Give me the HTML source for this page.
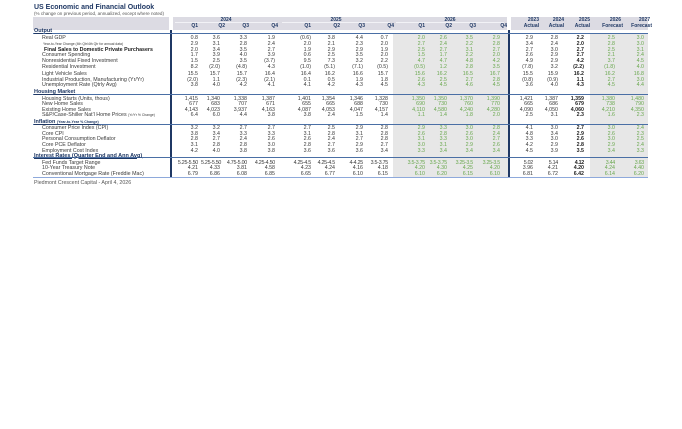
<!DOCTYPE html>
<html><head><meta charset="utf-8"><style>
*{margin:0;padding:0;box-sizing:border-box}
body{width:682px;height:429px;background:#fff;font-family:"Liberation Sans",sans-serif;position:relative;overflow:hidden;color:#3a3a3a}
.abs{position:absolute}
.row{position:absolute;left:33px;height:6px;line-height:6px;display:flex;font-size:5.3px;white-space:nowrap}
.row>span{display:block;text-align:right;padding-right:3px;overflow:visible}
.row>span>span{display:inline}
.l{width:139px;text-align:left!important;padding-left:9px}
.g{color:#6aa84f}
.b{font-weight:bold;color:#222}
.sec{position:absolute;left:34px;font-size:5.5px;font-weight:bold;color:#1f3864;text-decoration:underline;height:6px;line-height:6px;white-space:nowrap}
.hl{position:absolute;left:33px;width:615px;height:1px;background:#4a6fa5}
.hd{position:absolute;font-size:5px;font-weight:bold;color:#1f3864;text-align:center}
</style></head><body>
<div class="abs" style="left:34px;top:4px;font-size:7px;font-weight:bold;color:#1f3864">US Economic and Financial Outlook</div>
<div class="abs" style="left:34px;top:11px;font-size:4.6px;color:#555">(% change on previous period, annualized, except where noted)</div>

<div class="abs" style="left:33px;top:17px;width:136px;height:13px;background:#dcdbe3"></div>
<div class="abs" style="left:173px;top:17px;width:334px;height:13px;background:#dcdbe3"></div>
<div class="abs" style="left:511px;top:17px;width:137px;height:13px;background:#dcdbe3"></div>
<div class="abs" style="left:175px;top:22px;width:102px;height:1px;background:#f2f2f6"></div>
<div class="abs" style="left:282px;top:22px;width:108px;height:1px;background:#f2f2f6"></div>
<div class="abs" style="left:396px;top:22px;width:108px;height:1px;background:#f2f2f6"></div>
<div class="hd" style="left:175px;top:17px;width:102px">2024</div>
<div class="hd" style="left:282px;top:17px;width:108px">2025</div>
<div class="hd" style="left:396px;top:17px;width:108px">2026</div>
<div class="row" style="top:17px;color:#1f3864;font-weight:bold;font-size:5px"><span class="l"></span><span style="width:33px"></span><span style="width:25px"></span><span style="width:27px"></span><span style="width:28px"></span><span style="width:36px"></span><span style="width:24px"></span><span style="width:28px"></span><span style="width:27px"></span><span style="width:35px"></span><span style="width:22px"></span><span style="width:26px"></span><span style="width:34px"></span><span style="width:25px">2023</span><span style="width:25px">2024</span><span style="width:30px;padding-right:7px">2025</span><span style="width:29px;padding-right:5px">2026</span><span style="width:29px;padding-right:5px">2027</span></div>
<div class="row" style="top:23px;color:#1f3864;font-weight:bold;font-size:5px"><span class="l"></span><span style="width:33px;padding-right:7px">Q1</span><span style="width:25px;padding-right:5px">Q2</span><span style="width:27px;padding-right:8px">Q3</span><span style="width:28px;padding-right:7px">Q4</span><span style="width:36px;padding-right:10px">Q1</span><span style="width:24px;padding-right:5px">Q2</span><span style="width:28px;padding-right:8px">Q3</span><span style="width:27px;padding-right:6px">Q4</span><span style="width:35px;padding-right:10px">Q1</span><span style="width:22px;padding-right:5px">Q2</span><span style="width:26px;padding-right:7px">Q3</span><span style="width:34px;padding-right:10px">Q4</span><span style="width:25px">Actual</span><span style="width:25px">Actual</span><span style="width:30px;padding-right:7px">Actual</span><span style="width:29px;padding-right:3px">Forecast</span><span style="width:29px;padding-right:3px">Forecast</span></div>

<div class="abs" style="left:393px;top:33px;width:115px;height:144px;background:#e7e7e7"></div>
<div class="abs" style="left:590px;top:33px;width:58px;height:144px;background:#e7e7e7"></div>
<div class="abs" style="left:170px;top:30px;width:2px;height:148px;background:#1f3864"></div>
<div class="abs" style="left:508px;top:30px;width:2px;height:148px;background:#1f3864"></div>
<div class="hl" style="top:33px"></div>
<div class="hl" style="top:94px"></div>
<div class="hl" style="top:124px"></div>
<div class="hl" style="top:157px"></div>
<div class="hl" style="top:177px;background:#8ea9db"></div>

<div class="sec" style="top:27.5px">Output</div>
<div class="sec" style="top:89px">Housing Market</div>
<div class="sec" style="top:119px">Inflation <span style="font-size:3.6px">(Year-to-Year % Change)</span></div>
<div class="sec" style="top:152.5px">Interest Rates (Quarter End and Ann Avg)</div>

<div class="row" style="top:35px"><span class="l">Real GDP</span><span style="width:29px">0.8</span><span style="width:22px">3.6</span><span style="width:27px">3.3</span><span style="width:28px">1.9</span><span style="width:36px">(0.6)</span><span style="width:24px">3.8</span><span style="width:28px">4.4</span><span style="width:27px;padding-right:5px">0.7</span><span class="g" style="width:35px">2.0</span><span class="g" style="width:22px">2.6</span><span class="g" style="width:26px">3.5</span><span class="g" style="width:32px;padding-right:8px">2.9</span><span style="width:2px"></span><span style="width:25px">2.9</span><span style="width:25px">2.8</span><span class="b" style="width:30px;padding-right:7px">2.2</span><span class="g" style="width:29px;padding-right:5px">2.5</span><span class="g" style="width:29px;padding-right:5px">3.0</span></div>
<div class="row" style="top:41px"><span class="l" style="font-size:3.4px;padding-left:10px">Year-to-Year Change (4th Qtr/4th Qtr for annual data)</span><span style="width:29px">2.9</span><span style="width:22px">3.1</span><span style="width:27px">2.8</span><span style="width:28px">2.4</span><span style="width:36px">2.0</span><span style="width:24px">2.1</span><span style="width:28px">2.3</span><span style="width:27px;padding-right:5px">2.0</span><span class="g" style="width:35px">2.7</span><span class="g" style="width:22px">2.4</span><span class="g" style="width:26px">2.2</span><span class="g" style="width:32px;padding-right:8px">2.8</span><span style="width:2px"></span><span style="width:25px">3.4</span><span style="width:25px">2.4</span><span class="b" style="width:30px;padding-right:7px">2.0</span><span class="g" style="width:29px;padding-right:5px">2.8</span><span class="g" style="width:29px;padding-right:5px">3.0</span></div>
<div class="row" style="top:46.5px"><span class="l b" style="padding-left:11px">Final Sales to Domestic Private Purchasers</span><span style="width:29px">2.0</span><span style="width:22px">3.4</span><span style="width:27px">3.5</span><span style="width:28px">2.7</span><span style="width:36px">1.9</span><span style="width:24px">2.9</span><span style="width:28px">2.9</span><span style="width:27px;padding-right:5px">1.9</span><span class="g" style="width:35px">2.5</span><span class="g" style="width:22px">2.7</span><span class="g" style="width:26px">3.1</span><span class="g" style="width:32px;padding-right:8px">2.7</span><span style="width:2px"></span><span style="width:25px">2.7</span><span style="width:25px">3.0</span><span class="b" style="width:30px;padding-right:7px">2.7</span><span class="g" style="width:29px;padding-right:5px">2.5</span><span class="g" style="width:29px;padding-right:5px">3.1</span></div>
<div class="row" style="top:52px"><span class="l">Consumer Spending</span><span style="width:29px">1.7</span><span style="width:22px">3.9</span><span style="width:27px">4.0</span><span style="width:28px">3.9</span><span style="width:36px">0.6</span><span style="width:24px">2.5</span><span style="width:28px">3.5</span><span style="width:27px;padding-right:5px">2.0</span><span class="g" style="width:35px">1.5</span><span class="g" style="width:22px">1.7</span><span class="g" style="width:26px">2.2</span><span class="g" style="width:32px;padding-right:8px">2.0</span><span style="width:2px"></span><span style="width:25px">2.6</span><span style="width:25px">2.9</span><span class="b" style="width:30px;padding-right:7px">2.7</span><span class="g" style="width:29px;padding-right:5px">2.1</span><span class="g" style="width:29px;padding-right:5px">2.4</span></div>
<div class="row" style="top:58px"><span class="l">Nonresidential Fixed Investment</span><span style="width:29px">1.5</span><span style="width:22px">2.5</span><span style="width:27px">3.5</span><span style="width:28px">(3.7)</span><span style="width:36px">9.5</span><span style="width:24px">7.3</span><span style="width:28px">3.2</span><span style="width:27px;padding-right:5px">2.2</span><span class="g" style="width:35px">4.7</span><span class="g" style="width:22px">4.7</span><span class="g" style="width:26px">4.8</span><span class="g" style="width:32px;padding-right:8px">4.2</span><span style="width:2px"></span><span style="width:25px">4.9</span><span style="width:25px">2.9</span><span class="b" style="width:30px;padding-right:7px">4.2</span><span class="g" style="width:29px;padding-right:5px">3.7</span><span class="g" style="width:29px;padding-right:5px">4.5</span></div>
<div class="row" style="top:63.5px"><span class="l">Residential Investment</span><span style="width:29px">8.2</span><span style="width:22px">(2.0)</span><span style="width:27px">(4.8)</span><span style="width:28px">4.3</span><span style="width:36px">(1.0)</span><span style="width:24px">(5.1)</span><span style="width:28px">(7.1)</span><span style="width:27px;padding-right:5px">(0.5)</span><span class="g" style="width:35px">(0.5)</span><span class="g" style="width:22px">1.2</span><span class="g" style="width:26px">2.8</span><span class="g" style="width:32px;padding-right:8px">3.5</span><span style="width:2px"></span><span style="width:25px">(7.8)</span><span style="width:25px">3.2</span><span class="b" style="width:30px;padding-right:7px">(2.2)</span><span class="g" style="width:29px;padding-right:5px">(1.8)</span><span class="g" style="width:29px;padding-right:5px">4.0</span></div>
<div class="row" style="top:70.5px"><span class="l">Light Vehicle Sales</span><span style="width:29px">15.5</span><span style="width:22px">15.7</span><span style="width:27px">15.7</span><span style="width:28px">16.4</span><span style="width:36px">16.4</span><span style="width:24px">16.2</span><span style="width:28px">16.6</span><span style="width:27px;padding-right:5px">15.7</span><span class="g" style="width:35px">15.6</span><span class="g" style="width:22px">16.2</span><span class="g" style="width:26px">16.5</span><span class="g" style="width:32px;padding-right:8px">16.7</span><span style="width:2px"></span><span style="width:25px">15.5</span><span style="width:25px">15.9</span><span class="b" style="width:30px;padding-right:7px">16.2</span><span class="g" style="width:29px;padding-right:5px">16.2</span><span class="g" style="width:29px;padding-right:5px">16.8</span></div>
<div class="row" style="top:76.5px"><span class="l">Industrial Production, Manufacturing (Yr/Yr)</span><span style="width:29px">(2.0)</span><span style="width:22px">1.1</span><span style="width:27px">(2.3)</span><span style="width:28px">(2.1)</span><span style="width:36px">0.1</span><span style="width:24px">0.5</span><span style="width:28px">1.9</span><span style="width:27px;padding-right:5px">1.8</span><span class="g" style="width:35px">2.6</span><span class="g" style="width:22px">2.5</span><span class="g" style="width:26px">2.7</span><span class="g" style="width:32px;padding-right:8px">2.8</span><span style="width:2px"></span><span style="width:25px">(0.8)</span><span style="width:25px">(0.9)</span><span class="b" style="width:30px;padding-right:7px">1.1</span><span class="g" style="width:29px;padding-right:5px">2.7</span><span class="g" style="width:29px;padding-right:5px">3.0</span></div>
<div class="row" style="top:82px"><span class="l">Unemployment Rate (Qtrly Avg)</span><span style="width:29px">3.8</span><span style="width:22px">4.0</span><span style="width:27px">4.2</span><span style="width:28px">4.1</span><span style="width:36px">4.1</span><span style="width:24px">4.2</span><span style="width:28px">4.3</span><span style="width:27px;padding-right:5px">4.5</span><span class="g" style="width:35px">4.3</span><span class="g" style="width:22px">4.5</span><span class="g" style="width:26px">4.6</span><span class="g" style="width:32px;padding-right:8px">4.5</span><span style="width:2px"></span><span style="width:25px">3.6</span><span style="width:25px">4.0</span><span class="b" style="width:30px;padding-right:7px">4.3</span><span class="g" style="width:29px;padding-right:5px">4.5</span><span class="g" style="width:29px;padding-right:5px">4.4</span></div>

<div class="row" style="top:95.5px"><span class="l">Housing Starts (Units, thous)</span><span style="width:29px">1,415</span><span style="width:22px">1,340</span><span style="width:27px">1,338</span><span style="width:28px">1,387</span><span style="width:36px">1,401</span><span style="width:24px">1,354</span><span style="width:28px">1,346</span><span style="width:27px;padding-right:5px">1,328</span><span class="g" style="width:35px">1,350</span><span class="g" style="width:22px">1,350</span><span class="g" style="width:26px">1,370</span><span class="g" style="width:32px;padding-right:8px">1,390</span><span style="width:2px"></span><span style="width:25px">1,421</span><span style="width:25px">1,387</span><span class="b" style="width:30px;padding-right:7px">1,359</span><span class="g" style="width:29px;padding-right:5px">1,380</span><span class="g" style="width:29px;padding-right:5px">1,480</span></div>
<div class="row" style="top:101px"><span class="l">New Home Sales</span><span style="width:29px">677</span><span style="width:22px">683</span><span style="width:27px">707</span><span style="width:28px">671</span><span style="width:36px">655</span><span style="width:24px">665</span><span style="width:28px">688</span><span style="width:27px;padding-right:5px">730</span><span class="g" style="width:35px">690</span><span class="g" style="width:22px">730</span><span class="g" style="width:26px">760</span><span class="g" style="width:32px;padding-right:8px">770</span><span style="width:2px"></span><span style="width:25px">665</span><span style="width:25px">686</span><span class="b" style="width:30px;padding-right:7px">679</span><span class="g" style="width:29px;padding-right:5px">738</span><span class="g" style="width:29px;padding-right:5px">790</span></div>
<div class="row" style="top:107px"><span class="l">Existing Home Sales</span><span style="width:29px">4,143</span><span style="width:22px">4,023</span><span style="width:27px">3,937</span><span style="width:28px">4,163</span><span style="width:36px">4,087</span><span style="width:24px">4,053</span><span style="width:28px">4,047</span><span style="width:27px;padding-right:5px">4,157</span><span class="g" style="width:35px">4,110</span><span class="g" style="width:22px">4,580</span><span class="g" style="width:26px">4,240</span><span class="g" style="width:32px;padding-right:8px">4,280</span><span style="width:2px"></span><span style="width:25px">4,090</span><span style="width:25px">4,050</span><span class="b" style="width:30px;padding-right:7px">4,060</span><span class="g" style="width:29px;padding-right:5px">4,210</span><span class="g" style="width:29px;padding-right:5px">4,350</span></div>
<div class="row" style="top:112px"><span class="l">S&amp;P/Case-Shiller Nat'l Home Prices <span style="font-size:3.4px">(Yr/Yr % Change)</span></span><span style="width:29px">6.4</span><span style="width:22px">6.0</span><span style="width:27px">4.4</span><span style="width:28px">3.8</span><span style="width:36px">3.8</span><span style="width:24px">2.4</span><span style="width:28px">1.5</span><span style="width:27px;padding-right:5px">1.4</span><span class="g" style="width:35px">1.1</span><span class="g" style="width:22px">1.4</span><span class="g" style="width:26px">1.8</span><span class="g" style="width:32px;padding-right:8px">2.0</span><span style="width:2px"></span><span style="width:25px">2.5</span><span style="width:25px">3.1</span><span class="b" style="width:30px;padding-right:7px">2.3</span><span class="g" style="width:29px;padding-right:5px">1.6</span><span class="g" style="width:29px;padding-right:5px">2.3</span></div>

<div class="row" style="top:125px"><span class="l">Consumer Price Index (CPI)</span><span style="width:29px">3.2</span><span style="width:22px">3.2</span><span style="width:27px">2.7</span><span style="width:28px">2.7</span><span style="width:36px">2.7</span><span style="width:24px">2.5</span><span style="width:28px">2.9</span><span style="width:27px;padding-right:5px">2.8</span><span class="g" style="width:35px">2.9</span><span class="g" style="width:22px">3.3</span><span class="g" style="width:26px">3.0</span><span class="g" style="width:32px;padding-right:8px">2.8</span><span style="width:2px"></span><span style="width:25px">4.1</span><span style="width:25px">3.0</span><span class="b" style="width:30px;padding-right:7px">2.7</span><span class="g" style="width:29px;padding-right:5px">3.0</span><span class="g" style="width:29px;padding-right:5px">2.4</span></div>
<div class="row" style="top:130.5px"><span class="l">Core CPI</span><span style="width:29px">3.8</span><span style="width:22px">3.4</span><span style="width:27px">3.3</span><span style="width:28px">3.3</span><span style="width:36px">3.1</span><span style="width:24px">2.8</span><span style="width:28px">3.1</span><span style="width:27px;padding-right:5px">2.8</span><span class="g" style="width:35px">2.6</span><span class="g" style="width:22px">2.8</span><span class="g" style="width:26px">2.6</span><span class="g" style="width:32px;padding-right:8px">2.4</span><span style="width:2px"></span><span style="width:25px">4.8</span><span style="width:25px">3.4</span><span class="b" style="width:30px;padding-right:7px">2.9</span><span class="g" style="width:29px;padding-right:5px">2.6</span><span class="g" style="width:29px;padding-right:5px">2.3</span></div>
<div class="row" style="top:136px"><span class="l">Personal Consumption Deflator</span><span style="width:29px">2.8</span><span style="width:22px">2.7</span><span style="width:27px">2.4</span><span style="width:28px">2.6</span><span style="width:36px">2.6</span><span style="width:24px">2.4</span><span style="width:28px">2.7</span><span style="width:27px;padding-right:5px">2.8</span><span class="g" style="width:35px">3.1</span><span class="g" style="width:22px">3.3</span><span class="g" style="width:26px">3.0</span><span class="g" style="width:32px;padding-right:8px">2.7</span><span style="width:2px"></span><span style="width:25px">3.3</span><span style="width:25px">3.0</span><span class="b" style="width:30px;padding-right:7px">2.6</span><span class="g" style="width:29px;padding-right:5px">3.0</span><span class="g" style="width:29px;padding-right:5px">2.5</span></div>
<div class="row" style="top:142px"><span class="l">Core PCE Deflator</span><span style="width:29px">3.1</span><span style="width:22px">2.8</span><span style="width:27px">2.8</span><span style="width:28px">3.0</span><span style="width:36px">2.8</span><span style="width:24px">2.7</span><span style="width:28px">2.9</span><span style="width:27px;padding-right:5px">2.7</span><span class="g" style="width:35px">3.0</span><span class="g" style="width:22px">3.1</span><span class="g" style="width:26px">2.9</span><span class="g" style="width:32px;padding-right:8px">2.6</span><span style="width:2px"></span><span style="width:25px">4.2</span><span style="width:25px">2.9</span><span class="b" style="width:30px;padding-right:7px">2.8</span><span class="g" style="width:29px;padding-right:5px">2.9</span><span class="g" style="width:29px;padding-right:5px">2.4</span></div>
<div class="row" style="top:148px"><span class="l">Employment Cost Index</span><span style="width:29px">4.2</span><span style="width:22px">4.0</span><span style="width:27px">3.8</span><span style="width:28px">3.8</span><span style="width:36px">3.6</span><span style="width:24px">3.6</span><span style="width:28px">3.6</span><span style="width:27px;padding-right:5px">3.4</span><span class="g" style="width:35px">3.3</span><span class="g" style="width:22px">3.4</span><span class="g" style="width:26px">3.4</span><span class="g" style="width:32px;padding-right:8px">3.4</span><span style="width:2px"></span><span style="width:25px">4.5</span><span style="width:25px">3.9</span><span class="b" style="width:30px;padding-right:7px">3.5</span><span class="g" style="width:29px;padding-right:5px">3.4</span><span class="g" style="width:29px;padding-right:5px">3.3</span></div>

<div class="row" style="top:159.5px;letter-spacing:-0.25px"><span class="l" style="letter-spacing:0">Fed Funds Target Range</span><span style="width:29px">5.25-5.50</span><span style="width:22px">5.25-5.50</span><span style="width:27px">4.75-5.00</span><span style="width:28px">4.25-4.50</span><span style="width:36px">4.25-4.5</span><span style="width:24px">4.25-4.5</span><span style="width:28px">4-4.25</span><span style="width:27px;padding-right:5px">3.5-3.75</span><span class="g" style="width:35px">3.5-3.75</span><span class="g" style="width:22px">3.5-3.75</span><span class="g" style="width:26px">3.25-3.5</span><span class="g" style="width:32px;padding-right:8px">3.25-3.5</span><span style="width:2px"></span><span style="width:25px">5.02</span><span style="width:25px">5.14</span><span class="b" style="width:30px;padding-right:7px">4.12</span><span class="g" style="width:29px;padding-right:5px">3.44</span><span class="g" style="width:29px;padding-right:5px">3.63</span></div>
<div class="row" style="top:165px"><span class="l">10-Year Treasury Note</span><span style="width:29px">4.21</span><span style="width:22px">4.33</span><span style="width:27px">3.81</span><span style="width:28px">4.58</span><span style="width:36px">4.23</span><span style="width:24px">4.24</span><span style="width:28px">4.16</span><span style="width:27px;padding-right:5px">4.18</span><span class="g" style="width:35px">4.20</span><span class="g" style="width:22px">4.30</span><span class="g" style="width:26px">4.25</span><span class="g" style="width:32px;padding-right:8px">4.20</span><span style="width:2px"></span><span style="width:25px">3.96</span><span style="width:25px">4.21</span><span class="b" style="width:30px;padding-right:7px">4.20</span><span class="g" style="width:29px;padding-right:5px">4.24</span><span class="g" style="width:29px;padding-right:5px">4.40</span></div>
<div class="row" style="top:170.5px"><span class="l">Conventional Mortgage Rate (Freddie Mac)</span><span style="width:29px">6.79</span><span style="width:22px">6.86</span><span style="width:27px">6.08</span><span style="width:28px">6.85</span><span style="width:36px">6.65</span><span style="width:24px">6.77</span><span style="width:28px">6.10</span><span style="width:27px;padding-right:5px">6.15</span><span class="g" style="width:35px">6.10</span><span class="g" style="width:22px">6.20</span><span class="g" style="width:26px">6.15</span><span class="g" style="width:32px;padding-right:8px">6.10</span><span style="width:2px"></span><span style="width:25px">6.81</span><span style="width:25px">6.72</span><span class="b" style="width:30px;padding-right:7px">6.42</span><span class="g" style="width:29px;padding-right:5px">6.14</span><span class="g" style="width:29px;padding-right:5px">6.20</span></div>

<div class="abs" style="left:34px;top:179.5px;font-size:5.3px;color:#555">Piedmont Crescent Capital - April 4, 2026</div>
</body></html>
